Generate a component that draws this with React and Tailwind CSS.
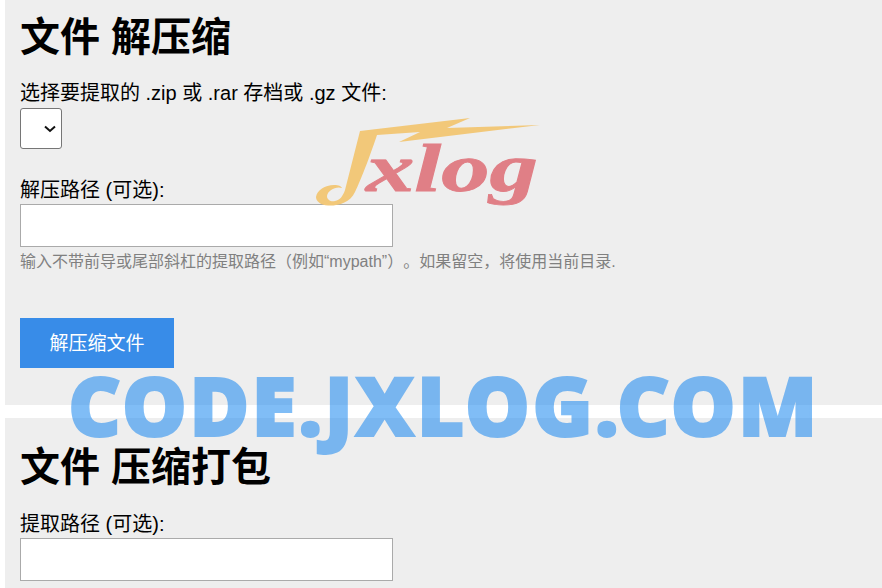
const sans = "font-['Liberation_Sans','Noto_Sans_CJK_SC',sans-serif]";

const Logo = () => (
  <svg className="absolute left-[316px] top-[118px] pointer-events-none overflow-visible" width="226" height="92" viewBox="316 118 226 92">
    <path
      fill="#f2c879"
      d="M360 131 L470 118 L447 128 L540 125 L399 142 L420 132 L377 135 C372 150 362 178 355 192 C350 203 338 206 328 205.5 C320 205 316 201 316 197 C317 190 325 185 334 185 C339 185 341 186 342 188 C336 186 328 190 327 196 C327 200 331 202 335 201 C340 200 343 196 345 190 Z"
    />
    <text
      transform="translate(366 191) scale(1 0.9)"
      fill="#e07f86"
      stroke="#e07f86"
      strokeWidth="1"
      fontSize="76"
      fontWeight="700"
      fontStyle="italic"
      textLength="172"
      lengthAdjust="spacingAndGlyphs"
      className="font-['Liberation_Serif',serif]"
    >
      xlog
    </text>
  </svg>
);

const Heading = ({ children }) => (
  <h1 className="text-[40px] leading-[48px] font-bold text-black">{children}</h1>
);

const Label = ({ children }) => (
  <label className="block text-[20px] leading-[26px] text-black">{children}</label>
);

const PathInput = () => (
  <input type="text" className="block mt-[1px] w-[373px] h-[43px] bg-white border border-[#aaaaaa]" />
);

const Help = ({ className, children }) => (
  <p className={`text-[16px] leading-[20px] text-[#808080] whitespace-nowrap [text-spacing-trim:space-all] ${className}`}>{children}</p>
);

const FileSelect = () => (
  <div className="relative mt-[2px] w-[42px] h-[41px]">
    <select className="block w-full h-full appearance-none bg-white border border-[#767676] rounded-[3px]"></select>
    <svg className="absolute left-[24px] top-[17px] pointer-events-none" width="12" height="8" viewBox="0 0 12 8">
      <polyline points="1,1.5 6,6 11,1.5" fill="none" stroke="#111111" strokeWidth="2" />
    </svg>
  </div>
);

export default function App() {
  return (
    <div className={`relative h-[588px] overflow-hidden bg-white pl-[5px] ${sans}`}>
      {/* extract form */}
      <section className="bg-[#eeeeee] pl-[15px] pt-[13px] pb-[37px]">
        <Heading>文件 解压缩</Heading>
        <div className="mt-[19px]">
          <Label>选择要提取的 .zip 或 .rar 存档或 .gz 文件:</Label>
          <FileSelect />
        </div>
        <div className="mt-[28px]">
          <Label>解压路径 (可选):</Label>
          <PathInput />
          <Help className="mt-[5px]">输入不带前导或尾部斜杠的提取路径（例如“mypath”）。如果留空，将使用当前目录.</Help>
        </div>
        <button className="block mt-[46px] w-[154px] h-[50px] pt-[3px] bg-[#388ce8] text-white text-[19px]">解压缩文件</button>
      </section>

      {/* compress form */}
      <section className="mt-[13px] bg-[#eeeeee] pl-[15px] pt-[25px] pb-[37px]">
        <Heading>文件 压缩打包</Heading>
        <div className="mt-[20px]">
          <Label>提取路径 (可选):</Label>
          <PathInput />
          <Help className="mt-[6px]">输入要压缩的文件路径（例如“mypath”）。如果留空，将使用当前目录.</Help>
        </div>
      </section>

      {/* watermarks sit over the page */}
      <Logo />
      <span className="absolute left-[68px] top-[348px] pointer-events-none text-[82px] leading-[112px] tracking-[2.1px] font-black font-['Noto_Sans',sans-serif] text-[#1988f0] opacity-55 [-webkit-text-stroke:2px_#1988f0] whitespace-nowrap">
        CODE.JXLOG.COM
      </span>
    </div>
  );
}
